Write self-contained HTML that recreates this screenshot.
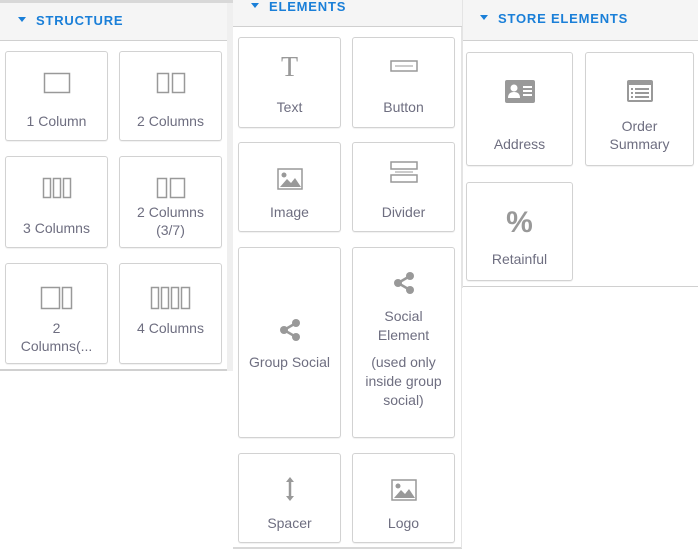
<!DOCTYPE html>
<html><head><style>
*{margin:0;padding:0;box-sizing:border-box}
body{width:698px;height:551px;background:#fff;position:relative;overflow:hidden;font-family:"Liberation Sans",sans-serif}
.a{position:absolute}
.hd{position:absolute;background:#f5f5f5;border-bottom:1px solid #d0d0d0;color:#1a7fd8;font-weight:bold;font-size:13px;letter-spacing:0.8px}
.hd .tri{display:inline-block;width:0;height:0;border-left:4px solid transparent;border-right:4px solid transparent;border-top:5px solid #1a7fd8;margin-right:10px;vertical-align:middle;position:relative;top:-2px}
.c{position:absolute;border:1px solid #d2d2d2;border-radius:3px;background:#fff;box-shadow:0 1px 1px rgba(0,0,0,.06);text-align:center;color:#6e6e80;font-size:14px;line-height:18px}
.c svg{display:block;margin:0 auto}
</style></head><body>
<!-- panel 1 -->
<div class="a" style="left:0;top:0;width:233px;height:371px;background:#fff;border-top:3px solid #d8d8d8"></div>
<div class="a" style="left:227px;top:3px;width:6px;height:368px;background:#efefef"></div>
<div class="a" style="left:0;top:369px;width:227px;height:2px;background:#d0d0d0"></div>
<div class="hd" style="left:0;top:3px;width:227px;height:38px;padding:10px 0 0 18px">
<span class="tri"></span>STRUCTURE</div>
<div class="c" style="left:5px;top:51px;width:103px;height:90px;padding-top:20px"><svg width="28" height="22"><rect x="1.5" y="1.5" width="25" height="19" fill="none" stroke="#999" stroke-width="1.5"/></svg><div style="margin-top:18px">1 Column</div></div>
<div class="c" style="left:119px;top:51px;width:103px;height:90px;padding-top:20px"><svg width="30" height="22"><rect x="1.5" y="1.5" width="11" height="19" fill="none" stroke="#999" stroke-width="1.5"/><rect x="16.5" y="1.5" width="12" height="19" fill="none" stroke="#999" stroke-width="1.5"/></svg><div style="margin-top:18px">2 Columns</div></div>
<div class="c" style="left:5px;top:156px;width:103px;height:92px;padding-top:20px"><svg width="30" height="22"><rect x="1.5" y="1.5" width="7" height="19" fill="none" stroke="#999" stroke-width="1.5"/><rect x="11.5" y="1.5" width="7" height="19" fill="none" stroke="#999" stroke-width="1.5"/><rect x="21.5" y="1.5" width="7" height="19" fill="none" stroke="#999" stroke-width="1.5"/></svg><div style="margin-top:20px">3 Columns</div></div>
<div class="c" style="left:119px;top:156px;width:103px;height:92px;padding-top:20px"><svg width="30" height="22"><rect x="1.5" y="1.5" width="9" height="19" fill="none" stroke="#999" stroke-width="1.5"/><rect x="14.5" y="1.5" width="14" height="19" fill="none" stroke="#999" stroke-width="1.5"/></svg><div style="margin-top:4px">2 Columns<br>(3/7)</div></div>
<div class="c" style="left:5px;top:263px;width:103px;height:101px;padding-top:22px"><svg width="34" height="24"><rect x="1.5" y="1.5" width="18" height="21" fill="none" stroke="#999" stroke-width="1.5"/><rect x="22.5" y="1.5" width="9" height="21" fill="none" stroke="#999" stroke-width="1.5"/></svg><div style="margin-top:9px">2<br>Columns(...</div></div>
<div class="c" style="left:119px;top:263px;width:103px;height:101px;padding-top:22px"><svg width="42" height="24"><rect x="1.5" y="1.5" width="7" height="21" fill="none" stroke="#999" stroke-width="1.5"/><rect x="11.5" y="1.5" width="7" height="21" fill="none" stroke="#999" stroke-width="1.5"/><rect x="21.5" y="1.5" width="7" height="21" fill="none" stroke="#999" stroke-width="1.5"/><rect x="31.5" y="1.5" width="8" height="21" fill="none" stroke="#999" stroke-width="1.5"/></svg><div style="margin-top:9px">4 Columns</div></div>

<!-- panel 2 -->
<div class="hd" style="left:233px;top:0;width:229px;height:27px;padding:0 0 0 18px;line-height:14px">
<span class="tri"></span>ELEMENTS</div>
<div class="a" style="left:233px;top:547px;width:229px;height:2px;background:#d8d8d8"></div>
<div class="a" style="left:461px;top:27px;width:1px;height:521px;background:#e4e4e4"></div>
<div class="c" style="left:238px;top:37px;width:103px;height:91px;padding-top:16px"><div style="font-family:'Liberation Serif',serif;font-size:28px;color:#999;line-height:28px">T</div><div style="margin-top:16px">Text</div></div>
<div class="c" style="left:352px;top:37px;width:103px;height:91px;padding-top:22px"><svg width="28" height="12"><rect x="1" y="1" width="26" height="10" fill="none" stroke="#999" stroke-width="1.5"/><line x1="5" y1="6" x2="23" y2="6" stroke="#999" stroke-width="1"/></svg><div style="margin-top:26px">Button</div></div>
<div class="c" style="left:238px;top:142px;width:103px;height:90px;padding-top:25px"><svg width="26" height="22"><rect x="1" y="1" width="24" height="20" fill="none" stroke="#999" stroke-width="1.5"/><circle cx="7" cy="7" r="2.5" fill="#999"/><path d="M3 19 L10 11 L14 15 L18 10 L24 19 Z" fill="#999"/></svg><div style="margin-top:13px">Image</div></div>
<div class="c" style="left:352px;top:142px;width:103px;height:90px;padding-top:18px"><svg width="28" height="22"><rect x="1" y="1" width="26" height="7" fill="none" stroke="#999" stroke-width="1.5"/><rect x="1" y="14" width="26" height="7" fill="none" stroke="#999" stroke-width="1.5"/><line x1="5" y1="11" x2="23" y2="11" stroke="#999" stroke-width="1"/></svg><div style="margin-top:20px">Divider</div></div>
<div class="c" style="left:238px;top:247px;width:103px;height:191px;padding-top:71px"><svg width="22" height="22"><circle cx="17" cy="4" r="4" fill="#999"/><circle cx="5" cy="11" r="4" fill="#999"/><circle cx="17" cy="18" r="4" fill="#999"/><path d="M17 4 L5 11 L17 18" stroke="#999" stroke-width="2.5" fill="none"/></svg><div style="margin-top:12px">Group Social</div></div>
<div class="c" style="left:352px;top:247px;width:103px;height:191px;padding-top:24px"><svg width="22" height="22"><circle cx="17" cy="4" r="4" fill="#999"/><circle cx="5" cy="11" r="4" fill="#999"/><circle cx="17" cy="18" r="4" fill="#999"/><path d="M17 4 L5 11 L17 18" stroke="#999" stroke-width="2.5" fill="none"/></svg><div style="margin-top:13px;line-height:19px">Social<br>Element</div><div style="margin-top:8px;line-height:19px">(used only<br>inside group<br>social)</div></div>
<div class="c" style="left:238px;top:453px;width:103px;height:90px;padding-top:22px"><svg width="10" height="26"><path d="M5 3 V23" stroke="#999" stroke-width="2.5"/><path d="M1 6 L5 1 L9 6 Z M1 20 L5 25 L9 20 Z" fill="#999"/></svg><div style="margin-top:12px">Spacer</div></div>
<div class="c" style="left:352px;top:453px;width:103px;height:90px;padding-top:25px"><svg width="26" height="22"><rect x="1" y="1" width="24" height="20" fill="none" stroke="#999" stroke-width="1.5"/><circle cx="7" cy="7" r="2.5" fill="#999"/><path d="M3 19 L10 11 L14 15 L18 10 L24 19 Z" fill="#999"/></svg><div style="margin-top:13px">Logo</div></div>

<!-- panel 3 -->
<div class="a" style="left:462px;top:0;width:1px;height:288px;background:#e4e4e4"></div>
<div class="hd" style="left:463px;top:0;width:235px;height:41px;padding:11px 0 0 17px">
<span class="tri"></span>STORE ELEMENTS</div>
<div class="a" style="left:463px;top:286px;width:235px;height:1px;background:#d0d0d0"></div>
<div class="c" style="left:466px;top:52px;width:107px;height:114px;padding-top:27px"><svg width="30" height="24"><rect x="0" y="0" width="30" height="23" rx="2" fill="#999"/><circle cx="9" cy="8" r="3.5" fill="#fff"/><path d="M3 18 Q3 12 9 12 Q15 12 15 18 Z" fill="#fff"/><rect x="18" y="6" width="9" height="2" fill="#fff"/><rect x="18" y="10" width="9" height="2" fill="#fff"/><rect x="18" y="14" width="9" height="2" fill="#fff"/></svg><div style="margin-top:31px">Address</div></div>
<div class="c" style="left:585px;top:52px;width:109px;height:114px;padding-top:27px"><svg width="26" height="24"><rect x="0" y="0" width="26" height="22" rx="2" fill="#999"/><rect x="2" y="5" width="22" height="15" fill="#fff"/><rect x="4" y="8" width="2" height="2" fill="#999"/><rect x="8" y="8" width="14" height="2" fill="#999"/><rect x="4" y="12" width="2" height="2" fill="#999"/><rect x="8" y="12" width="14" height="2" fill="#999"/><rect x="4" y="16" width="2" height="2" fill="#999"/><rect x="8" y="16" width="14" height="2" fill="#999"/></svg><div style="margin-top:13px">Order<br>Summary</div></div>
<div class="c" style="left:466px;top:182px;width:107px;height:99px;padding-top:26px"><div style="font-size:30px;font-weight:bold;color:#999;line-height:28px">%</div><div style="margin-top:13px">Retainful</div></div>
</body></html>
